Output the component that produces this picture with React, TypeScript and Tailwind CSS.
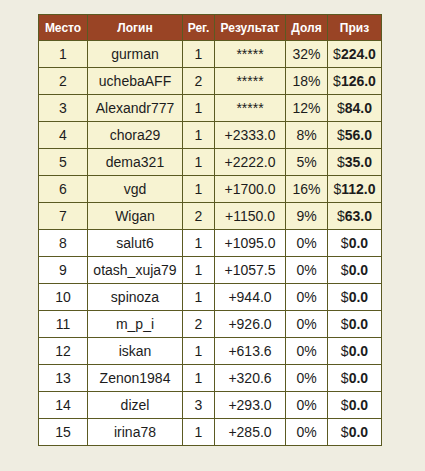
const rows: [number, string, number, string, string, string, boolean][] = [
  [1, "gurman", 1, "*****", "32%", "224.0", true],
  [2, "uchebaAFF", 2, "*****", "18%", "126.0", true],
  [3, "Alexandr777", 1, "*****", "12%", "84.0", true],
  [4, "chora29", 1, "+2333.0", "8%", "56.0", true],
  [5, "dema321", 1, "+2222.0", "5%", "35.0", true],
  [6, "vgd", 1, "+1700.0", "16%", "112.0", true],
  [7, "Wigan", 2, "+1150.0", "9%", "63.0", true],
  [8, "salut6", 1, "+1095.0", "0%", "0.0", false],
  [9, "otash_xuja79", 1, "+1057.5", "0%", "0.0", false],
  [10, "spinoza", 1, "+944.0", "0%", "0.0", false],
  [11, "m_p_i", 2, "+926.0", "0%", "0.0", false],
  [12, "iskan", 1, "+613.6", "0%", "0.0", false],
  [13, "Zenon1984", 1, "+320.6", "0%", "0.0", false],
  [14, "dizel", 3, "+293.0", "0%", "0.0", false],
  [15, "irina78", 1, "+285.0", "0%", "0.0", false],
];

const th = "border border-[#5b5a22] bg-[#994425] text-white font-bold text-[12px] h-[26px] p-0 text-center";
const td = "border border-[#5b5a22] h-[27px] p-0 text-center text-[14px]";

export default function App() {
  return (
    <div className="min-h-[471px] bg-[#efede1] pt-[14px] pl-[38px] font-['Liberation_Sans',Arial,sans-serif] text-[#1c1c1c]">
      <table className="table-fixed border-collapse w-[343px]">
        <colgroup>
          <col className="w-[49px]" />
          <col className="w-[95px]" />
          <col className="w-[32px]" />
          <col className="w-[71px]" />
          <col className="w-[42px]" />
          <col className="w-[54px]" />
        </colgroup>
        <thead>
          <tr>
            <th className={th}>Место</th>
            <th className={th}>Логин</th>
            <th className={th}>Рег.</th>
            <th className={th}>Результат</th>
            <th className={th}>Доля</th>
            <th className={th}>Приз</th>
          </tr>
        </thead>
        <tbody>
          {rows.map(([place, login, reg, result, share, prize, paid]) => (
            <tr key={place} className={paid ? "bg-[#f7f3d2]" : "bg-white"}>
              <td className={td}>{place}</td>
              <td className={td}>{login}</td>
              <td className={td}>{reg}</td>
              <td className={td}>{result}</td>
              <td className={td}>{share}</td>
              <td className={td}>
                $<b>{prize}</b>
              </td>
            </tr>
          ))}
        </tbody>
      </table>
    </div>
  );
}
